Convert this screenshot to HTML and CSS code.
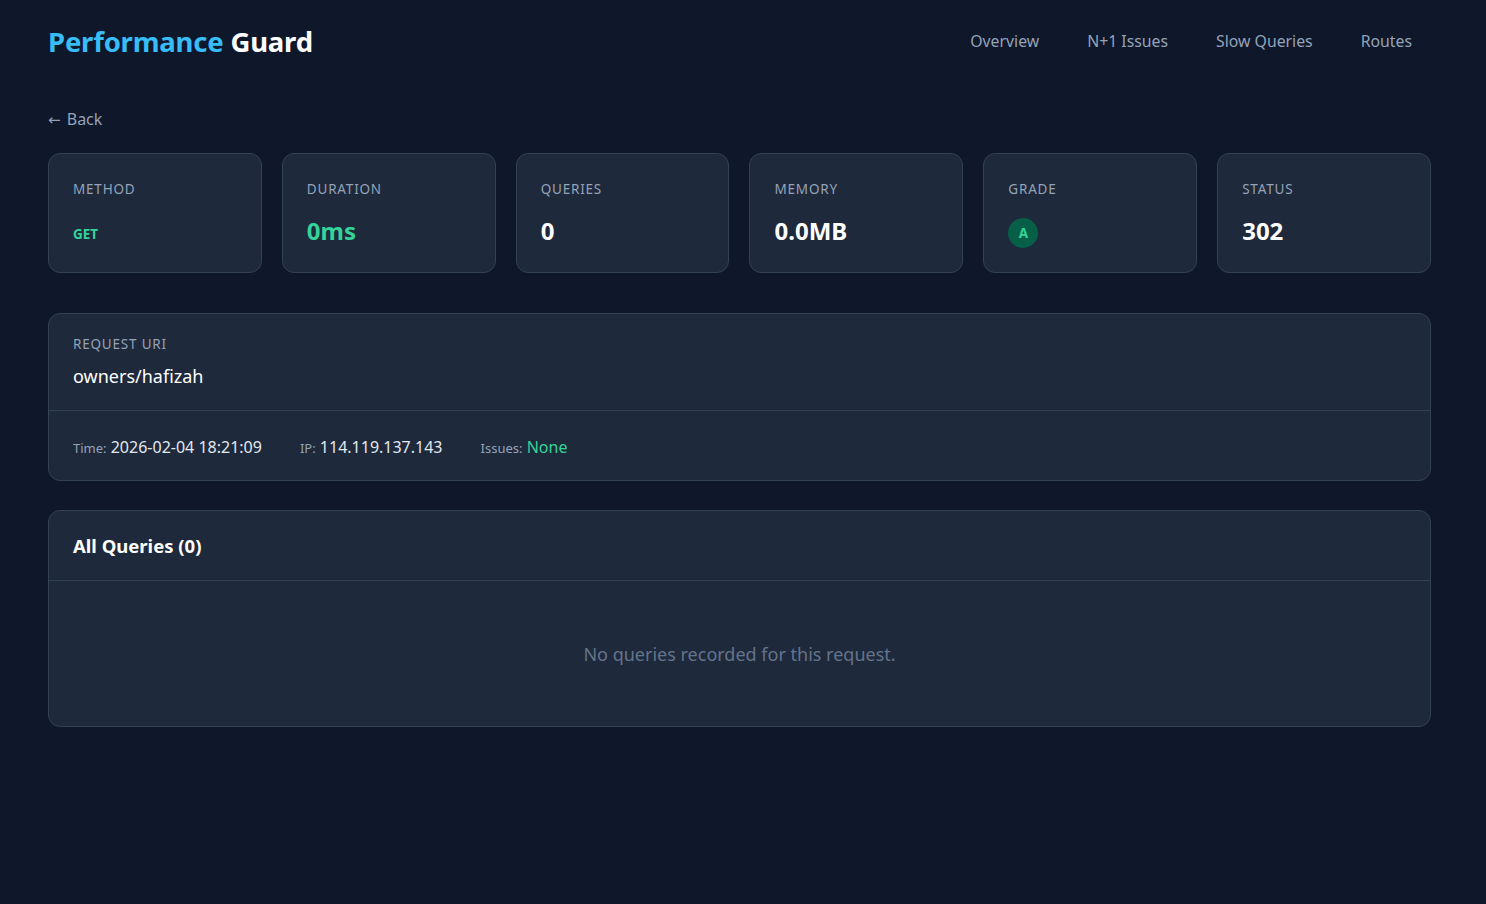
FILE: index.html
```html
<!DOCTYPE html>
<html lang="en">
<head>
	<meta charset="UTF-8">
	<title>Performance Guard - Request</title>
	<link rel="stylesheet" href="styles.css">
</head>
<body>
<div class="page">
	<header class="header">
		<div class="logo"><span class="logo-accent">Performance</span> Guard</div>
		<nav class="nav">
			<a href="#">Overview</a>
			<a href="#">N+1 Issues</a>
			<a href="#">Slow Queries</a>
			<a href="#">Routes</a>
		</nav>
	</header>

	<a class="back" href="#"><span class="arrow">&larr;</span> Back</a>

	<div class="stats">
		<div class="stat">
			<div class="stat-label">Method</div>
			<div class="stat-value"><span class="method">GET</span></div>
		</div>
		<div class="stat">
			<div class="stat-label">Duration</div>
			<div class="stat-value green">0ms</div>
		</div>
		<div class="stat">
			<div class="stat-label">Queries</div>
			<div class="stat-value">0</div>
		</div>
		<div class="stat">
			<div class="stat-label">Memory</div>
			<div class="stat-value">0.0MB</div>
		</div>
		<div class="stat">
			<div class="stat-label">Grade</div>
			<div class="stat-value"><span class="grade">A</span></div>
		</div>
		<div class="stat">
			<div class="stat-label">Status</div>
			<div class="stat-value">302</div>
		</div>
	</div>

	<div class="card">
		<div class="card-top">
			<div class="stat-label">Request URI</div>
			<div class="uri">owners/hafizah</div>
		</div>
		<div class="meta">
			<span class="meta-item"><small>Time:</small> 2026-02-04 18:21:09</span>
			<span class="meta-item"><small>IP:</small> 114.119.137.143</span>
			<span class="meta-item"><small>Issues:</small> <span class="green">None</span></span>
		</div>
	</div>

	<div class="card queries">
		<div class="card-head">All Queries (0)</div>
		<div class="empty">No queries recorded for this request.</div>
	</div>
</div>
</body>
</html>
```

FILE: styles.css
```css
* {
	margin: 0;
	padding: 0;
	box-sizing: border-box;
}

body {
	background: #0f172a;
	color: #e2e8f0;
	font-family: "Noto Sans", "Open Sans", sans-serif;
}

a {
	text-decoration: none;
	color: inherit;
}

.page {
	padding: 0 55px 40px 48px;
}

.header {
	display: flex;
	justify-content: space-between;
	align-items: center;
	height: 82px;
}

.logo {
	font-size: 27.5px;
	font-weight: 700;
	color: #fff;
	letter-spacing: -0.2px;
}

.logo-accent {
	color: #38bdf8;
}

.nav {
	display: flex;
	gap: 48px;
	padding-right: 19px;
}

.nav a {
	font-size: 15.8px;
	color: #94a3b8;
}

.back {
	display: inline-block;
	margin-top: 25px;
	font-size: 16px;
	line-height: 24px;
	color: #94a3b8;
}

.arrow {
	font-family: "DejaVu Sans", sans-serif;
	font-size: 15px;
	margin-right: 2px;
}

.stats {
	display: grid;
	grid-template-columns: repeat(6, 1fr);
	gap: 20px;
	margin-top: 21px;
}

.stat {
	background: #1e293b;
	border: 1px solid #334155;
	border-radius: 12px;
	height: 120px;
	padding: 25px 24px 24px;
}

.stat-label {
	font-size: 13.5px;
	line-height: 20px;
	letter-spacing: 0.8px;
	text-transform: uppercase;
	color: #94a3b8;
}

.stat-value {
	margin-top: 16px;
	font-size: 24px;
	font-weight: 700;
	line-height: 32px;
	color: #fff;
	display: flex;
	align-items: center;
	height: 32px;
}

.green {
	color: #34d399;
}

.method {
	font-size: 13.5px;
	font-weight: 700;
	color: #34d399;
	margin-top: 6px;
}

.grade {
	width: 30px;
	height: 30px;
	border-radius: 50%;
	background: #065f46;
	color: #34d399;
	font-size: 13.5px;
	font-weight: 700;
	display: flex;
	align-items: center;
	justify-content: center;
	margin-top: 4px;
}

.card {
	background: #1e293b;
	border: 1px solid #334155;
	border-radius: 12px;
	margin-top: 40px;
}

.card-top {
	padding: 20px 24px 19px;
	border-bottom: 1px solid #334155;
}

.uri {
	margin-top: 7px;
	font-size: 18px;
	line-height: 30px;
	color: #fff;
}

.meta {
	display: flex;
	gap: 38px;
	padding: 24px 24px 20px;
	font-size: 16px;
	line-height: 24px;
	color: #e2e8f0;
}

.meta small {
	font-size: 13px;
	color: #94a3b8;
}

.queries {
	margin-top: 29px;
}

.card-head {
	padding: 23px 24px 22px;
	font-size: 18.5px;
	font-weight: 700;
	line-height: 24px;
	color: #fff;
	border-bottom: 1px solid #334155;
}

.empty {
	padding: 58px 24px 57px;
	text-align: center;
	font-size: 18px;
	line-height: 30px;
	color: #64748b;
}
```
